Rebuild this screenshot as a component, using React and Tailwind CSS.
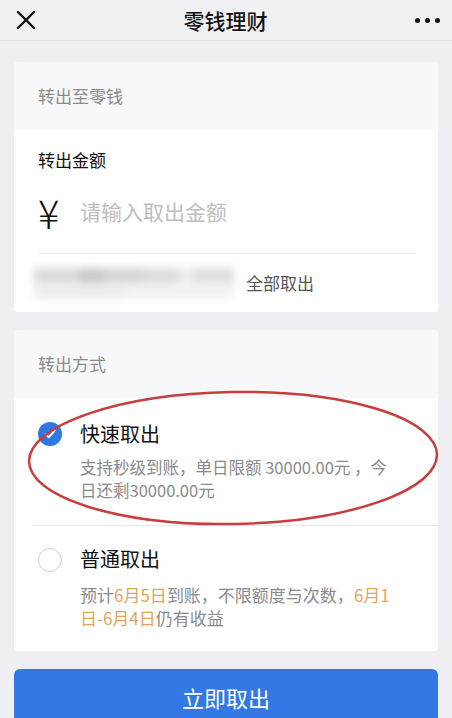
import React from "react";

const FONT = { fontFamily: '"Noto Sans CJK SC", "Noto Sans", sans-serif' };

const CloseIcon = () => (
  <svg width="20" height="20" viewBox="0 0 20 20" className="block">
    <path d="M2 2 L18 18 M18 2 L2 18" stroke="#111" strokeWidth="2.4" strokeLinecap="round" />
  </svg>
);

const MoreIcon = () => (
  <div className="flex items-center gap-[5px]">
    <span className="h-[5px] w-[5px] rounded-full bg-[#111]" />
    <span className="h-[5px] w-[5px] rounded-full bg-[#111]" />
    <span className="h-[5px] w-[5px] rounded-full bg-[#111]" />
  </div>
);

const Checked = () => (
  <span className="flex h-[24px] w-[24px] items-center justify-center rounded-full bg-[#2f78e3]">
    <svg width="14" height="14" viewBox="0 0 14 14">
      <path d="M2.5 7.2 L5.8 10.2 L11.5 3.8" fill="none" stroke="#fff" strokeWidth="2" strokeLinecap="round" strokeLinejoin="round" />
    </svg>
  </span>
);

const Unchecked = () => (
  <span className="block h-[24px] w-[24px] rounded-full border border-[#cfcfd3] bg-white" />
);

// 가려진 잔액 문구 (모자이크 처리)
const BlurredBalance = () => (
  <div className="flex w-[205px] flex-col gap-[3px] blur-[4px]">
    <div className="flex h-[16px]">
      <span className="w-[45px] bg-[#dadadc]" />
      <span className="w-[25px] bg-[#cacacc]" />
      <span className="w-[40px] bg-[#d6d6d8]" />
      <span className="w-[35px] bg-[#dcdcde]" />
      <span className="w-[15px] bg-[#ececee]" />
      <span className="w-[40px] bg-[#dedee0]" />
    </div>
    <div className="flex h-[11px]">
      <span className="w-[90px] bg-[#eaeaec]" />
      <span className="w-[110px] bg-[#f0f0f2]" />
    </div>
  </div>
);

const Orange = ({ children }) => <span className="text-[#e3a45a]">{children}</span>;

export default function App() {
  return (
    <div className="relative min-h-[718px] w-full overflow-hidden bg-[#efeff3]" style={FONT}>
      {/* 상단 바 */}
      <div className="flex h-[41px] items-center justify-between border-b border-[#e2e2e4] bg-[#f1f1f3] pl-[16px] pr-[12px]">
        <CloseIcon />
        <div className="text-[21px] font-medium leading-none text-[#111]">零钱理财</div>
        <MoreIcon />
      </div>

      <div className="px-[14px] pt-[21px]">
        {/* 转出至零钱 */}
        <div className="overflow-hidden rounded-[4px] bg-white">
          <div className="flex h-[67px] items-center bg-[#f8f8fa] px-[24px] text-[17px] text-[#8a8a8c]">
            转出至零钱
          </div>
          <div className="px-[24px] pt-[19px]">
            <div className="text-[17px] leading-[24px] text-[#111]">转出金额</div>
            <div className="mt-[16px] flex h-[48px] items-center">
              <span className="w-[42px] text-[40px] font-light leading-none text-[#111]">¥</span>
              <span className="text-[21px] text-[#bdbdbf]">请输入取出金额</span>
            </div>
            <div className="mt-[17px] h-px bg-[#e8e8ea]" />
          </div>
          <div className="flex h-[58px] items-center gap-[7px] pl-[20px]">
            <BlurredBalance />
            <span className="text-[17px] text-[#555]">全部取出</span>
          </div>
        </div>

        {/* 转出方式 */}
        <div className="mt-[18px] overflow-hidden rounded-[4px] bg-white">
          <div className="flex h-[68px] items-center bg-[#f8f8fa] px-[24px] text-[17px] text-[#8a8a8c]">
            转出方式
          </div>

          <div className="flex pb-[23px] pl-[24px] pt-[24px]">
            <div className="w-[42px]">
              <Checked />
            </div>
            <div>
              <div className="text-[20px] leading-[24px] text-[#111]">快速取出</div>
              <div className="mt-[10px] whitespace-nowrap text-[16.5px] leading-[23px] text-[#8a8a8c]">
                支持秒级到账，单日限额 30000.00元 ，今
                <br />
                日还剩30000.00元
              </div>
            </div>
          </div>

          <div className="ml-[18px] h-px bg-[#e8e8ea]" />

          <div className="flex pb-[22px] pl-[24px] pt-[21px]">
            <div className="w-[42px] pt-[1px]">
              <Unchecked />
            </div>
            <div>
              <div className="text-[20px] leading-[24px] text-[#111]">普通取出</div>
              <div className="mt-[12px] whitespace-nowrap text-[17px] leading-[23px] text-[#8a8a8c]">
                预计<Orange>6月5日</Orange>到账，不限额度与次数，<Orange>6月1</Orange>
                <br />
                <Orange>日-6月4日</Orange>仍有收益
              </div>
            </div>
          </div>
        </div>

        <button className="mt-[18px] flex h-[56px] w-full items-center justify-center rounded-[6px] bg-[#3478e5] text-[22px] text-white">
          立即取出
        </button>
      </div>

      {/* 빨간 표시 원 */}
      <svg className="pointer-events-none absolute left-0 top-0" width="452" height="718">
        <ellipse cx="233" cy="458" rx="204" ry="66" transform="rotate(-1 233 458)" fill="none" stroke="#c63e3d" strokeWidth="2.5" />
      </svg>
    </div>
  );
}
